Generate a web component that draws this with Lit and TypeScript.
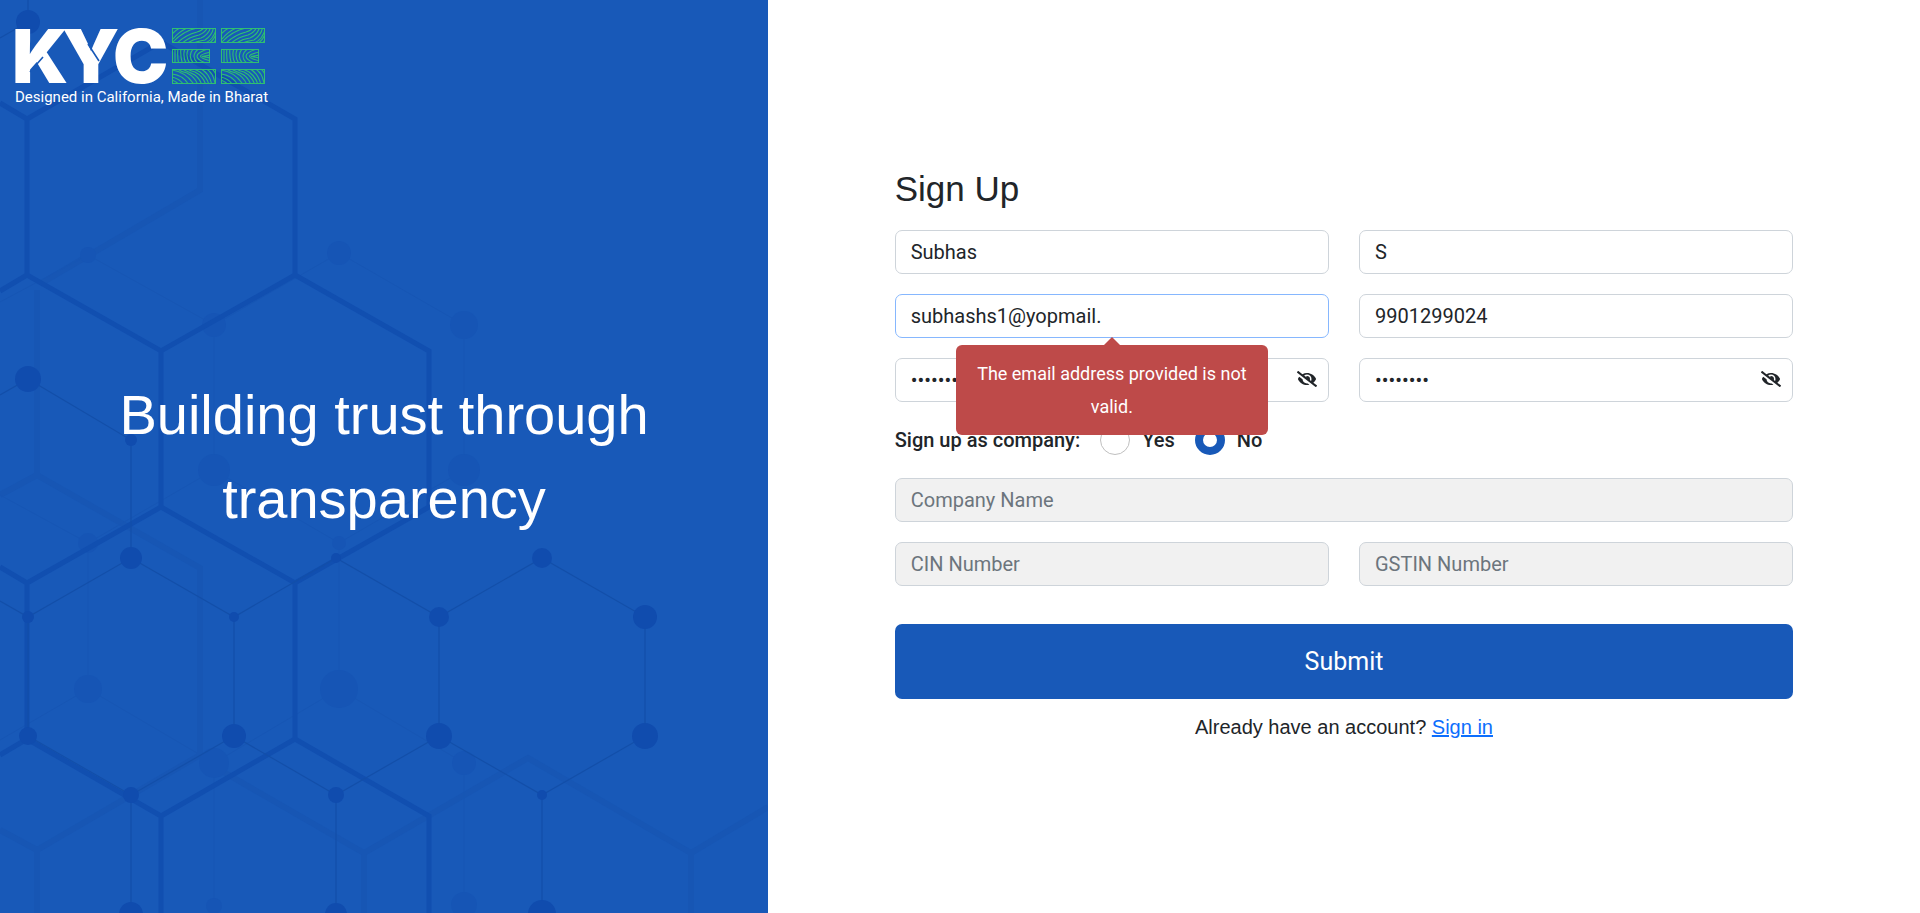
import { LitElement, html, css, svg } from "lit";
import { customElement, state } from "lit/decorators.js";

type Dot = [number, number, number];

const dots: Dot[] = [
  [28, 22, 12], [28, 379, 13], [131, 440, 6], [131, 558, 11], [28, 617, 6],
  [234, 617, 5], [336, 558, 5], [439, 617, 10], [542, 558, 10], [645, 617, 12],
  [28, 736, 9], [234, 736, 12], [439, 736, 13], [645, 736, 13], [131, 795, 8],
  [336, 795, 8], [542, 795, 5], [131, 914, 12], [336, 914, 11], [542, 914, 14],
];

const faintDots: Dot[] = [
  [88, 255, 8], [214, 325, 12], [339, 253, 12], [464, 325, 14], [214, 470, 16],
  [464, 470, 16], [88, 543, 10], [339, 543, 7], [88, 689, 14], [339, 689, 19],
  [214, 763, 15], [464, 763, 12], [214, 906, 8], [464, 905, 13],
];

@customElement("hex-backdrop")
export class HexBackdrop extends LitElement {
  static styles = css`
    :host { display: block; }
    svg { display: block; width: 100%; height: 100%; }
    .bold { fill: none; stroke: #114fb0; stroke-width: 5; }
    .thin { fill: none; stroke: #134fa9; stroke-width: 1.2; }
    .dot { fill: #104cae; }
    .veil { fill: none; stroke: #1756b4; stroke-width: 6; }
    .veil-thin { fill: none; stroke: #1756b4; stroke-width: 1; }
    .veil-dot { fill: #1655b5; }
  `;

  render() {
    return html`
      <svg viewBox="0 0 768 913" preserveAspectRatio="xMinYMin slice" aria-hidden="true">
        <path class="veil" d="M200 0V190L40 284M37 290V475L200 568V755M0 495L37 475M0 830L37 850L200 755M220 770L364 853L528 758L691 853L768 807M37 850V913M364 853V913M691 853V913"/>
        <path class="veil-thin" d="M0 302L88 255L214 325L339 253L464 325V470L339 543L214 470V325M339 543V689L464 763V913M339 689L214 763V913M214 763L88 689V543L214 470M88 543L0 495M88 689L0 740"/>
        ${faintDots.map(([x, y, r]) => svg`<circle class="veil-dot" cx=${x} cy=${y} r=${r} />`)}
        <path class="bold" d="M0 103L27 119L161 42L295 119V275L161 351L27 275V119M0 291L27 275M161 351V507L27 583L0 567M295 275L429 351V507L295 583L161 507M27 583V739L0 755M27 739L161 816L295 739V583M295 739L429 816V913M161 816V913"/>
        <path class="thin" d="M28 0V22L0 38M0 395L28 379L131 440V558L28 617L0 601M28 617V736M131 558L234 617L336 558L439 617L542 558L645 617V736L542 795L439 736V617M234 617V736L131 795V913M131 795L28 736M234 736L336 795L439 736M336 795V913M542 795V913"/>
        ${dots.map(([x, y, r]) => svg`<circle class="dot" cx=${x} cy=${y} r=${r} />`)}
      </svg>
    `;
  }
}

@customElement("kycee-logo")
export class KyceeLogo extends LitElement {
  static styles = css`
    :host { display: block; }
    svg { display: block; width: 252px; height: 58px; overflow: visible; }
    .word { fill: #fff; font: 900 74px Inter, "Open Sans", sans-serif; }
    .cut { stroke: #1859b8; stroke-width: 1.6; fill: none; }
    .frame, .ridge { fill: none; stroke: #2fbf71; stroke-width: 1; }
    .ridge { stroke-width: 1.1; }
  `;

  private bars(dx: number) {
    return svg`
      <g transform="translate(${dx} 0)">
        <g clip-path="url(#top)">
          <path class="ridge" d="M158 12Q166 2 178 -1M158 15Q168 4 182 1Q186 0 187 -3M161 17Q170 8 182 5Q189 3 190 -2M166 17Q174 10 184 8Q192 5 193 -2M171 17Q178 12 186 11Q195 7 196 -2M176 17Q183 14 190 13Q198 8 199 -2M184 17Q192 17 197 11Q201 6 202 -2M192 18Q199 14 203 3M198 17Q202 12 204 6M157 7Q162 2 168 -1"/>
        </g>
        <rect class="frame" x="157.5" y="1.5" width="43" height="14"/>
        <g clip-path="url(#mid)">
          <path class="ridge" d="M160 21V38M163 21Q162 30 164 38M166 21Q165 30 168 38M170 21Q167 30 172 38M174 21Q169 29 176 38M179 21Q171 29 180 38M185 21Q173 29 185 38M196 21Q168 29 196 38M196 25Q175 29 196 34M196 28L187 29.5L196 31"/>
        </g>
        <rect class="frame" x="157.5" y="22.5" width="37" height="13"/>
        <g clip-path="url(#low)">
          <path class="ridge" d="M157 53Q162 55 164 58M157 50Q165 52 169 58M157 47Q168 48 174 58M157 43Q170 45 178 56M161 41Q166 45 172 46Q180 50 183 58M166 41Q170 44 176 46Q184 49 187 58M171 41Q175 44 180 45Q188 49 191 58M177 41Q181 43 185 45Q192 50 194 58M184 41Q194 45 197 58M190 41Q198 45 200 56M196 41Q200 44 202 50"/>
        </g>
        <rect class="frame" x="157.5" y="42.5" width="43" height="14"/>
      </g>
    `;
  }

  render() {
    return html`
      <svg viewBox="0 0 252 58" role="img" aria-label="KYCEE">
        <defs>
          <clipPath id="top"><rect x="157" y="1" width="44" height="15"/></clipPath>
          <clipPath id="mid"><rect x="157" y="22" width="38" height="14"/></clipPath>
          <clipPath id="low"><rect x="157" y="42" width="44" height="15"/></clipPath>
        </defs>
        <text class="word" x="-3 47 98" y="56">KYC</text>
        <path class="cut" d="M15 45L28 30M73 17L84 34"/>
        ${this.bars(0)} ${this.bars(49)}
      </svg>
    `;
  }
}

@customElement("app-root")
export class AppRoot extends LitElement {
  @state() private company = false;
  @state() private shown: Record<string, boolean> = {};

  static styles = css`
    :host {
      display: block;
      font-family: Roboto, "Liberation Sans", sans-serif;
      color: #212529;
    }
    *, *::before, *::after { box-sizing: border-box; }
    .page { display: grid; grid-template-columns: 2fr 3fr; min-height: 100vh; }
    .hero {
      position: relative;
      display: grid;
      grid-template-rows: 1fr auto 1fr;
      background: #1859b8;
      color: #fff;
      overflow: hidden;
    }
    .backdrop { position: absolute; inset: 0; }
    .brand { position: relative; padding: 27px 15px 0; }
    .tagline { margin: 2px 0 0; font-size: 15px; line-height: 20px; }
    .slogan {
      position: relative;
      margin: 0;
      padding: 0 96px;
      font: 400 56px/84px "Liberation Sans", Arial, sans-serif;
      text-align: center;
    }
    .side { display: grid; align-items: center; padding: 0 11%; }
    .form { display: block; }
    .title {
      margin: 0 0 15px;
      font: 400 35px/52px "Liberation Sans", Arial, sans-serif;
    }
    .fields { display: grid; grid-template-columns: 1fr 1fr; gap: 20px 30px; }
    .field { position: relative; display: grid; }
    .wide { grid-column: 1 / -1; }
    .input {
      width: 100%;
      height: 44px;
      padding: 0 15px;
      border: 1px solid #ced4da;
      border-radius: 7px;
      background: #fff;
      color: #212529;
      font: 400 20px/30px Roboto, sans-serif;
      outline: none;
    }
    .input::placeholder { color: #6c757d; opacity: 1; }
    .input:disabled { background: #f1f1f1; }
    .active { border-color: #86b7fe; }
    .secret { padding-right: 48px; }
    .eye {
      position: absolute;
      right: 12px;
      top: 13px;
      display: grid;
      padding: 0;
      border: 0;
      background: none;
      color: #212529;
      cursor: pointer;
    }
    .eye svg { width: 20px; height: 16px; fill: currentColor; }
    .tip {
      position: absolute;
      z-index: 1;
      top: 51px;
      left: 50%;
      width: 312px;
      margin-left: -156px;
      padding: 12px 16px;
      border-radius: 6px;
      background: #be4a49;
      color: #fff;
      font-size: 18px;
      line-height: 33px;
      text-align: center;
    }
    .tip::before {
      content: "";
      position: absolute;
      left: 50%;
      bottom: 100%;
      margin-left: -8px;
      border: 8px solid transparent;
      border-top-width: 0;
      border-bottom-color: #be4a49;
    }
    .choice {
      display: flex;
      align-items: center;
      height: 36px;
      margin: 0;
      padding: 0;
      border: 0;
      font-size: 20px;
      font-weight: 500;
      line-height: 30px;
    }
    .option { display: flex; align-items: center; gap: 12px; margin-left: 20px; }
    .radio {
      appearance: none;
      width: 30px;
      height: 30px;
      margin: 0;
      border: 1px solid #bfbfbf;
      border-radius: 50%;
      background: #fff;
    }
    .radio:checked { border: 8px solid #1859b8; }
    .submit {
      display: block;
      width: 100%;
      height: 75px;
      margin-top: 38px;
      border: 0;
      border-radius: 7px;
      background: #1859b8;
      color: #fff;
      font: 400 25px/38px Roboto, sans-serif;
      cursor: pointer;
    }
    .signin {
      margin: 13px 0 8px;
      font: 400 20px/30px "Liberation Sans", Arial, sans-serif;
      text-align: center;
    }
    .link { color: #0d6efd; }
    @media (max-width: 900px) {
      .page { grid-template-columns: 1fr; }
      .slogan { padding: 24px; }
      .side { padding: 24px; }
      .fields { grid-template-columns: 1fr; }
    }
  `;

  private toggle(id: string) {
    this.shown = { ...this.shown, [id]: !this.shown[id] };
  }

  private text(id: string, label: string, value: string, type = "text") {
    return html`
      <input class="input ${id === "email" ? "active" : ""}" id=${id} type=${type}
        placeholder=${label} aria-label=${label} .value=${value} />
    `;
  }

  private secret(id: string, label: string) {
    return html`
      <div class="field">
        <input class="input secret" id=${id} type=${this.shown[id] ? "text" : "password"}
          placeholder=${label} aria-label=${label} .value=${"abcd1234"} />
        <button class="eye" type="button" aria-label="Show ${label}" @click=${() => this.toggle(id)}>
          <svg viewBox="0 0 640 512" aria-hidden="true">
            <path d="M320 400c-75.850 0-137.250-58.710-142.900-133.110L72.200 185.820c-13.790 17.300-26.480 35.590-36.720 55.590a32.350 32.350 0 0 0 0 29.190C89.710 376.410 197.070 448 320 448c26.910 0 52.870-4 77.890-10.460L346 397.390a144.130 144.130 0 0 1-26 2.610zm313.820 58.100l-110.550-85.440a331.250 331.250 0 0 0 81.250-102.070 32.350 32.350 0 0 0 0-29.190C550.290 135.590 442.930 64 320 64a308.150 308.150 0 0 0-147.320 37.700L45.460 3.370A16 16 0 0 0 23 6.180L3.370 31.450A16 16 0 0 0 6.180 53.900l588.360 454.730a16 16 0 0 0 22.460-2.810l19.640-25.270a16 16 0 0 0-2.820-22.450zm-183.720-142l-39.300-30.380A94.750 94.750 0 0 0 416 256a94.760 94.760 0 0 0-121.310-92.210A47.650 47.650 0 0 1 304 192a46.640 46.640 0 0 1-1.540 10l-73.610-56.890A142.310 142.310 0 0 1 320 112a143.920 143.920 0 0 1 144 144c0 21.630-5.290 41.790-13.900 60.110z"/>
          </svg>
        </button>
      </div>
    `;
  }

  private companyField(id: string, label: string, wide = false) {
    return html`
      <div class="field ${wide ? "wide" : ""}">
        <input class="input" id=${id} aria-label=${label} placeholder=${label}
          ?disabled=${!this.company} />
      </div>
    `;
  }

  render() {
    return html`
      <main class="page">
        <section class="hero">
          <hex-backdrop class="backdrop"></hex-backdrop>
          <div class="brand">
            <kycee-logo></kycee-logo>
            <p class="tagline">Designed in California, Made in Bharat</p>
          </div>
          <p class="slogan">Building trust through transparency</p>
        </section>
        <section class="side">
          <form class="form" novalidate @submit=${(e: Event) => e.preventDefault()}>
            <h1 class="title">Sign Up</h1>
            <div class="fields">
              <div class="field">${this.text("first", "First Name", "Subhas")}</div>
              <div class="field">${this.text("last", "Last Name", "S")}</div>
              <div class="field">
                ${this.text("email", "Email", "subhashs1@yopmail.", "email")}
                <div class="tip" role="alert">The email address provided is not valid.</div>
              </div>
              <div class="field">${this.text("phone", "Mobile Number", "9901299024", "tel")}</div>
              ${this.secret("password", "Password")}
              ${this.secret("confirm", "Confirm Password")}
              <div class="choice wide" role="radiogroup" aria-labelledby="kind">
                <span id="kind">Sign up as company:</span>
                <label class="option">
                  <input class="radio" type="radio" name="company" .checked=${this.company}
                    @change=${() => (this.company = true)} />Yes
                </label>
                <label class="option">
                  <input class="radio" type="radio" name="company" .checked=${!this.company}
                    @change=${() => (this.company = false)} />No
                </label>
              </div>
              ${this.companyField("company-name", "Company Name", true)}
              ${this.companyField("cin", "CIN Number")}
              ${this.companyField("gstin", "GSTIN Number")}
            </div>
            <button class="submit" type="submit">Submit</button>
            <p class="signin">Already have an account? <a class="link" href="#signin">Sign in</a></p>
          </form>
        </section>
      </main>
    `;
  }
}
